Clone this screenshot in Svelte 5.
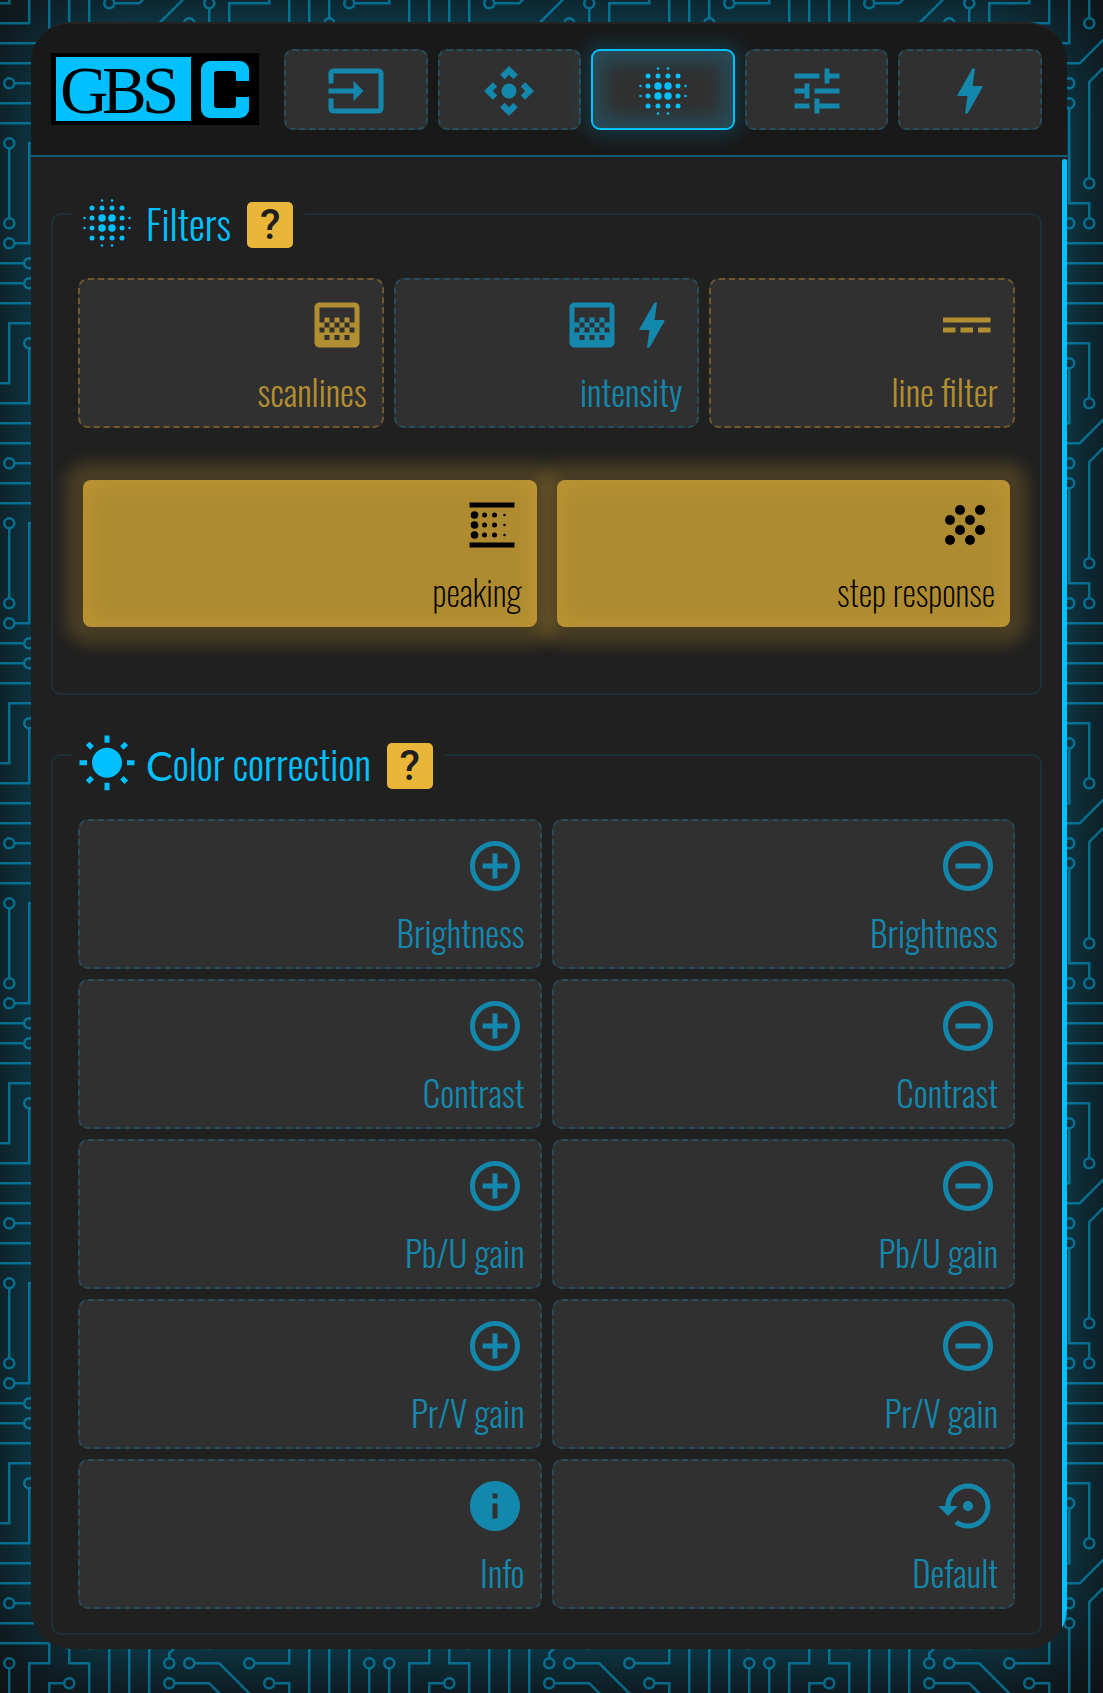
<script>
  const icons = {
    input: 'M21 3.01H3c-1.1 0-2 .9-2 2V9h2V4.99h18v14.03H3V15H1v4.01c0 1.1.9 1.98 2 1.98h18c1.1 0 2-.88 2-1.98v-14c0-1.11-.9-2-2-2zM11 16l4-4-4-4v3H1v2h10v3z',
    camera: 'M15.54 5.54L13.77 7.3 12 5.54 10.23 7.3 8.46 5.54 12 2zm2.92 10l-1.76-1.77L18.46 12l-1.76-1.77 1.76-1.77L22 12zm-10 2.92l1.77-1.76L12 18.46l1.77-1.76 1.77 1.76L12 22zm-2.92-10l1.76 1.77L5.54 12l1.76 1.77-1.76 1.77L2 12zM12 9a3 3 0 1 0 0 6 3 3 0 0 0 0-6z',
    tune: 'M3 17v2h6v-2H3zM3 5v2h10V5H3zm10 16v-2h8v-2h-8v-2h-2v6h2zM7 9v2H3v2h4v2h2V9H7zm14 4v-2H11v2h10zm-6-4h2V7h4V5h-4V3h-2v6z',
    bolt: 'M11 21h-1l1-7H7.5c-.88 0-.33-.75-.31-.78C8.48 10.94 10.42 7.54 13.01 3h1l-1 7h3.51c.4 0 .62.19.4.66C12.97 17.55 11 21 11 21z',
    gradient: 'M11 9h2v2h-2zm-2 2h2v2H9zm4 0h2v2h-2zm2-2h2v2h-2zM7 9h2v2H7zm12-6H5c-1.1 0-2 .9-2 2v14c0 1.1.9 2 2 2h14c1.1 0 2-.9 2-2V5c0-1.1-.9-2-2-2zM9 18H7v-2h2v2zm4 0h-2v-2h2v2zm4 0h-2v-2h2v2zm2-7h-2v2h2v2h-2v-2h-2v2h-2v-2h-2v2H9v-2H7v2H5v-2h2v-2H5V5h14v6z',
    power: 'M2 9v2h19V9H2zm0 6h5v-2H2v2zm7 0h5v-2H9v2zm7 0h5v-2h-5v2z',
    sun: 'M6.76 4.84l-1.8-1.79-1.41 1.41 1.79 1.79 1.42-1.41zM4 10.5H1v2h3v-2zm9-9.95h-2V3.5h2V.55zm7.45 3.91l-1.41-1.41-1.79 1.79 1.41 1.41 1.79-1.79zm-3.21 13.7l1.79 1.8 1.41-1.41-1.8-1.79-1.4 1.4zM20 10.5v2h3v-2h-3zm-8-5c-3.31 0-6 2.69-6 6s2.69 6 6 6 6-2.69 6-6-2.69-6-6-6zm-1 16.95h2V19.5h-2v2.95zm-7.45-3.91l1.41 1.41 1.79-1.8-1.41-1.41-1.79 1.8z',
    plus: 'M13 7h-2v4H7v2h4v4h2v-4h4v-2h-4V7zm-1-5C6.48 2 2 6.48 2 12s4.48 10 10 10 10-4.48 10-10S17.52 2 12 2zm0 18c-4.41 0-8-3.59-8-8s3.59-8 8-8 8 3.59 8 8-3.59 8-8 8z',
    minus: 'M7 11v2h10v-2H7zm5-9C6.48 2 2 6.48 2 12s4.48 10 10 10 10-4.48 10-10S17.52 2 12 2zm0 18c-4.41 0-8-3.59-8-8s3.59-8 8-8 8 3.59 8 8-3.59 8-8 8z',
    info: 'M12 2C6.48 2 2 6.48 2 12s4.48 10 10 10 10-4.48 10-10S17.52 2 12 2zm1 15h-2v-6h2v6zm0-8h-2V7h2v2z',
    restore: 'M14 12c0-1.1-.9-2-2-2s-2 .9-2 2 .9 2 2 2 2-.9 2-2zm-2-9c-4.97 0-9 4.03-9 9H0l4 4 4-4H5c0-3.87 3.13-7 7-7s7 3.13 7 7-3.13 7-7 7c-1.51 0-2.91-.49-4.06-1.3l-1.42 1.44C8.04 20.3 9.94 21 12 21c4.97 0 9-4.03 9-9s-4.03-9-9-9z',
    linear: 'M3 3h18v2H3zM3 19h18v2H3z'
  };

  // Icons made of dots: [cx, cy, r]
  const dots = {
    blur: [
      [10, 3, 0.5], [14, 3, 0.5], [10, 21, 0.5], [14, 21, 0.5],
      [3, 10, 0.5], [3, 14, 0.5], [21, 10, 0.5], [21, 14, 0.5],
      [6, 6, 1], [10, 6, 1], [14, 6, 1], [18, 6, 1],
      [6, 10, 1], [18, 10, 1], [6, 14, 1], [18, 14, 1],
      [6, 18, 1], [10, 18, 1], [14, 18, 1], [18, 18, 1],
      [10, 10, 1.5], [14, 10, 1.5], [10, 14, 1.5], [14, 14, 1.5]
    ],
    linear: [8, 12, 16].flatMap((y) => [[5, y, 1.5], [9, y, 1], [13, y, 1], [17, y, 0.5]]),
    grain: [
      [10, 6, 2], [18, 6, 2], [6, 10, 2], [14, 10, 2],
      [10, 14, 2], [18, 14, 2], [6, 18, 2], [14, 18, 2]
    ]
  };

  const tabs = [
    { icon: 'input', name: 'Input' },
    { icon: 'camera', name: 'Position' },
    { icon: 'blur', name: 'Filters', active: true },
    { icon: 'tune', name: 'Preferences' },
    { icon: 'bolt', name: 'System' }
  ];

  const filters = [
    { label: 'scanlines', icons: ['gradient'], gold: true },
    { label: 'intensity', icons: ['gradient', 'bolt'] },
    { label: 'line filter', icons: ['power'], gold: true }
  ];

  const toggles = [
    { label: 'peaking', icons: ['linear'], on: true },
    { label: 'step response', icons: ['grain'], on: true }
  ];

  const colors = [
    ...['Brightness', 'Contrast', 'Pb/U gain', 'Pr/V gain'].flatMap((label) => [
      { label, icons: ['plus'] },
      { label, icons: ['minus'] }
    ]),
    { label: 'Info', icons: ['info'] },
    { label: 'Default', icons: ['restore'] }
  ];

  // Circuit board tile, 304 x 304 units
  const wires =
    'M44.1 224a5 5 0 1 1 0 2H0v-2h44.1zm160 48a5 5 0 1 1 0 2H82v-2h122.1zm57.8-46a5 5 0 1 1 0-2H304v2h-42.1zm0 16a5 5 0 1 1 0-2H304v2h-42.1zm6.2-114a5 5 0 1 1 0 2h-86.2a5 5 0 1 1 0-2h86.2zm-256-48a5 5 0 1 1 0 2H0v-2h12.1zm185.8 34a5 5 0 1 1 0-2h86.2a5 5 0 1 1 0 2h-86.2zM258 12.1a5 5 0 1 1-2 0V0h2v12.1zm-64 208a5 5 0 1 1-2 0v-54.2a5 5 0 1 1 2 0v54.2zm48-198.2V80h62v2h-64V21.9a5 5 0 1 1 2 0zm16 16V64h46v2h-48V37.9a5 5 0 1 1 2 0zm-128 96V208h16v12.1a5 5 0 1 1-2 0V210h-16v-76.1a5 5 0 1 1 2 0zm-5.9-21.9a5 5 0 1 1 0 2H114v48H85.9a5 5 0 1 1 0-2H112v-48h12.1zm-6.2 130a5 5 0 1 1 0-2H176v-74.1a5 5 0 1 1 2 0V242h-60.1zm-16-64a5 5 0 1 1 0-2H114v48h10.1a5 5 0 1 1 0 2H112v-48h-10.1zM66 284.1a5 5 0 1 1-2 0V274H50v30h-2v-32h18v12.1zM236.1 176a5 5 0 1 1 0 2H226v94h48v32h-2v-30h-48v-98h12.1zm25.8-30a5 5 0 1 1 0-2H274v44.1a5 5 0 1 1-2 0V146h-10.1zm-64 96a5 5 0 1 1 0-2H208v-80h16v-14h-42.1a5 5 0 1 1 0-2H226v18h-16v80h-12.1zm86.2-210a5 5 0 1 1 0 2H272V0h2v32h10.1zM98 101.9V146H53.9a5 5 0 1 1 0-2H96v-42.1a5 5 0 1 1 2 0zM53.9 34a5 5 0 1 1 0-2H80V0h2v34H53.9zm60.1 3.9V66H82v64H69.9a5 5 0 1 1 0-2H80V64h32V37.9a5 5 0 1 1 2 0zM101.9 82a5 5 0 1 1 0-2H128V37.9a5 5 0 1 1 2 0V82h-28.1zm16-64a5 5 0 1 1 0-2H146v44.1a5 5 0 1 1-2 0V18h-26.1zm102.2 270a5 5 0 1 1 0 2H98v14h-2v-16h124.1zM242 149.9V160h16v34h-16v62h48v48h-2v-46h-48v-66h16v-30h-16v-12.1a5 5 0 1 1 2 0zM53.9 18a5 5 0 1 1 0-2H64V2H48V0h18v18H53.9zm112 32a5 5 0 1 1 0-2H192V0h50v2h-48v48h-28.1zm-48-48H176v32h-14V21.9a5 5 0 1 1-2 0V34h18V0h-60.1zm0 96a5 5 0 1 1 0-2H137l32-32h39V21.9a5 5 0 1 1 2 0V66h-40.17l-32 32H117.9zM146 188.1a5 5 0 1 1-2 0v-76.51L175.59 80H224V21.9a5 5 0 1 1 2 0V82h-49.59L146 112.41v75.69zm16 32a5 5 0 1 1-2 0v-99.51L184.59 96H300.1v2H185.41L162 121.41v98.69zm-144-64a5 5 0 1 1-2 0v-3.51l48-48V48h32V0h2v50H66v55.41l-48 48v2.69zM50 53.9v43.51l-48 48V208h26.1a5 5 0 1 1 0 2H0v-65.41l48-48V53.9a5 5 0 1 1 2 0zm-16 16V89.41l-34 34v-2.82l32-32V69.9a5 5 0 1 1 2 0zM12.1 32a5 5 0 1 1 0 2H9.41L0 43.41V40.6L8.59 32h3.51zm265.8 18a5 5 0 1 1 0-2h18.69l7.41-7.41v2.82L297.41 50H277.9zm-16 160a5 5 0 1 1 0-2H288v-71.41l16-16v2.82l-14 14V210h-28.1zm-208 32a5 5 0 1 1 0-2H64v-22.59L40.59 194H21.9a5 5 0 1 1 0-2H41.41L66 216.59V242H53.9zm150.2 14a5 5 0 1 1 0 2H96v-56.6L56.6 162H37.9a5 5 0 1 1 0-2h19.5L98 200.6V256h106.1zm-150.2 2a5 5 0 1 1 0-2H80v-46.59L48.59 178H21.9a5 5 0 1 1 0-2H49.41L82 208.59V258H53.9zM34 39.8v1.61L9.41 66H0v-2h8.59L32 40.59V0h2v39.8zM2 300.1V302H0V256h18v48h-2v-46H2v42.1zM34 241v63h-2v-62H0v-2h34v1zM17 18H0v-2h16V0h2v18h-1zm273-2h14v2h-16V0h2v16zm-32 273v15h-2v-14h-14v14h-2v-16h18v1zM80 272h2v32h-2v-32z';

  // Walks the wire path and returns the centre of every solder pad on it.
  function findPads(d) {
    const pads = [];
    let x = 0, y = 0, sx = 0, sy = 0;
    for (const [, cmd, rest] of d.matchAll(/([a-zA-Z])([^a-zA-Z]*)/g)) {
      const n = (rest.match(/-?\d*\.?\d+/g) ?? []).map(Number);
      if (cmd === 'M') [x, y] = n;
      if (cmd === 'L') [x, y] = n.slice(-2);
      if (cmd === 'm') { x += n[0]; y += n[1]; }
      if (cmd === 'm' || cmd === 'M') { sx = x; sy = y; }
      if (cmd === 'l') for (let i = 0; i < n.length; i += 2) { x += n[i]; y += n[i + 1]; }
      if (cmd === 'H') x = n[0];
      if (cmd === 'h') x += n[0];
      if (cmd === 'V') y = n[0];
      if (cmd === 'v') y += n[0];
      if (cmd === 'z') { x = sx; y = sy; }
      if (cmd === 'a') {
        const [dx, dy] = n.slice(-2);
        pads.push([Math.round(x + dx / 2 + dy * 2.45), Math.round(y + dy / 2 - dx * 2.45)]);
        x += dx; y += dy;
      }
    }
    return pads;
  }

  const ring = ([x, y]) => `M${x} ${y - 3}a3 3 0 1 0 0 6 3 3 0 1 0 0-6z`;
  const board = wires + findPads(wires).map(ring).join('');
  const edgePads = [[1, 1], [113, 1], [1, 97]].flatMap(([x, y]) => [
    [x, y], [x + 304, y], [x, y + 304], [x + 304, y + 304]
  ]);
</script>

{#snippet icon(name)}
  <svg class="icon" viewBox="0 0 24 24" aria-hidden="true">
    {#if icons[name]}<path d={icons[name]} />{/if}
    {#each dots[name] ?? [] as [cx, cy, r]}<circle {cx} {cy} {r} />{/each}
  </svg>
{/snippet}

{#snippet card(item)}
  <button class="card" class:gold={item.gold} class:on={item.on} type="button">
    <span class="icons">{#each item.icons as name}{@render icon(name)}{/each}</span>
    <span class="label">{item.label}</span>
  </button>
{/snippet}

<div class="page">
  <svg class="board" aria-hidden="true">
    <defs>
      <pattern id="circuit" width="304" height="304" patternUnits="userSpaceOnUse" patternTransform="translate(-232 -58) scale(1.25)">
        <path d={board} />
        {#each edgePads as [cx, cy]}<circle class="pad" {cx} {cy} r="4" />{/each}
      </pattern>
    </defs>
    <rect width="100%" height="100%" fill="url(#circuit)" />
  </svg>

  <div class="panel">
    <header>
      <svg class="logo" viewBox="0 0 208 72" role="img" aria-label="GBS C">
        <rect width="208" height="72" fill="#000" />
        <rect x="5" y="4" width="135" height="64" fill="#00c0ff" />
        <text x="9 51 91" y="60">GBS</text>
        <rect x="150" y="8" width="48" height="57" rx="9" fill="#00c0ff" />
        <rect x="163" y="18" width="22" height="37" rx="3" fill="#000" />
        <rect x="184" y="28" width="15" height="16" fill="#000" />
      </svg>
      <nav>
        {#each tabs as tab}
          <button class="tab" class:active={tab.active} type="button" aria-label={tab.name}>
            {@render icon(tab.icon)}
          </button>
        {/each}
      </nav>
    </header>

    <main>
      <fieldset>
        <legend>
          {@render icon('blur')}
          <span class="title">Filters</span>
          <button class="help" type="button">?</button>
        </legend>
        <div class="grid three">
          {#each filters as item}{@render card(item)}{/each}
        </div>
        <div class="grid two toggles">
          {#each toggles as item}{@render card(item)}{/each}
        </div>
      </fieldset>

      <fieldset>
        <legend>
          {@render icon('sun')}
          <span class="title"><span class="wide">C</span>olor correction</span>
          <button class="help" type="button">?</button>
        </legend>
        <div class="grid two">
          {#each colors as item}{@render card(item)}{/each}
        </div>
      </fieldset>
      <div class="scrollbar"></div>
    </main>
  </div>
</div>

<style>
  :global(body) {
    margin: 0;
    background: #101112;
  }

  .page {
    position: relative;
    box-sizing: border-box;
    min-height: 100vh;
    padding: 22px 36px 43px 31px;
    overflow: hidden;
    font-family: Oswald, 'Roboto Condensed', 'Open Sans Condensed', 'Liberation Sans Narrow', 'Liberation Sans', sans-serif;
    font-weight: 300;
  }

  .board {
    position: absolute;
    inset: 0;
    width: 100%;
    height: 100%;
    fill: #08617d;
  }

  .pad {
    fill: none;
    stroke: #08617d;
    stroke-width: 2;
  }

  .panel {
    position: relative;
    border-top: 2px solid #262423;
    border-radius: 40px;
    background: #202020;
    box-shadow: 0 0 100px rgba(0, 192, 255, 0.4);
  }

  header {
    display: flex;
    align-items: center;
    gap: 25px;
    padding: 25px 25px 25px 20px;
    border-bottom: 2px solid #105c76;
    border-radius: 38px 38px 0 0;
    background: #191919;
  }

  .logo {
    flex: none;
    width: 208px;
    height: 72px;
    margin-bottom: 1px;
    overflow: visible;
  }

  .logo text {
    font: 400 67px 'Liberation Serif', serif;
  }

  nav {
    display: flex;
    flex: 1;
    gap: 10px;
  }

  button {
    box-sizing: border-box;
    font: inherit;
    cursor: pointer;
  }

  .icon {
    display: block;
    flex: none;
    width: 60px;
    height: 60px;
    fill: currentColor;
  }

  .tab {
    display: flex;
    flex: 1;
    align-items: center;
    justify-content: center;
    height: 81px;
    padding: 3px 0 0;
    border: 2px dashed #254e5c;
    border-radius: 9px;
    background: #303030;
    color: #1487ad;
  }

  .tab.active {
    border: 2px solid #00c0ff;
    color: #00c0ff;
    box-shadow: 0 0 20px 5px rgba(0, 192, 255, 0.2), inset 0 0 20px 10px rgba(0, 192, 255, 0.2);
  }

  main {
    position: relative;
    padding: 12px 25px 14px 20px;
    overflow: hidden;
    border-radius: 0 0 40px 40px;
  }

  .scrollbar {
    position: absolute;
    top: 2px;
    right: 0;
    bottom: 20px;
    width: 5px;
    border-radius: 3px 3px 0 0;
    background: #00c0ff;
  }

  fieldset {
    min-width: 0;
    margin: 0;
    padding: 19px 25px 24px;
    border: 2px solid #1c3037;
    border-radius: 10px;
  }

  fieldset + fieldset {
    margin-top: 15px;
  }

  legend {
    display: flex;
    align-items: center;
    height: 72px;
    margin-left: -5px;
    padding: 18px 12px 0 4px;
    color: #00c0ff;
  }

  .title {
    margin-left: 9px;
    font-size: 40px;
    line-height: 60px;
  }

  .wide {
    font-family: Lato, sans-serif;
    font-weight: 400;
  }

  .help {
    width: 46px;
    height: 46px;
    margin: 4px 0 0 16px;
    padding: 0;
    border: 0;
    border-radius: 5px;
    background: #e9b639;
    color: #202020;
    font: 500 42px/46px Roboto, sans-serif;
  }

  .grid {
    display: grid;
    gap: 10px;
  }

  .three {
    grid-template-columns: repeat(3, 1fr);
  }

  .two {
    grid-template-columns: repeat(2, 1fr);
  }

  .toggles {
    margin: 52px 5px 42px;
    gap: 20px;
  }

  .card {
    display: flex;
    flex-direction: column;
    align-items: flex-end;
    height: 150px;
    padding: 15px 15px 13px;
    border: 2px dashed #254e5c;
    border-radius: 10px;
    background: #303030;
    color: #1487ad;
  }

  .gold {
    border-color: #70592f;
    color: #b18e31;
  }

  .on {
    height: 147px;
    border: 0;
    border-radius: 8px;
    background: #ae8b31;
    color: #000;
    box-shadow: 0 0 16px 18px rgba(233, 182, 57, 0.2), inset 0 0 20px 8px rgba(233, 182, 57, 0.2);
  }

  .icons {
    display: flex;
  }

  .label {
    margin-top: 14px;
    font-size: 35px;
    line-height: 44px;
    white-space: nowrap;
  }

  .on .label {
    font-weight: 200;
  }
</style>
